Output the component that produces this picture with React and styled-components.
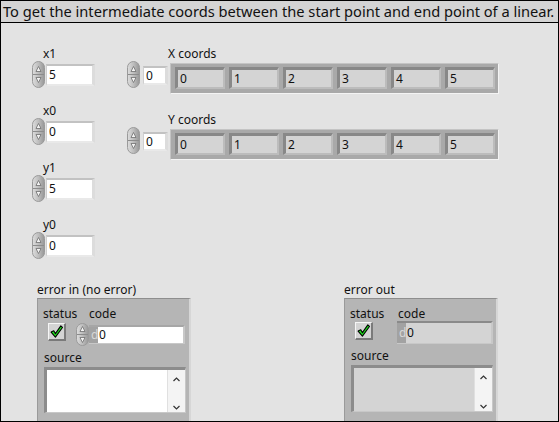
import React from 'react';
import styled, { createGlobalStyle } from 'styled-components';

const GlobalStyle = createGlobalStyle`
  body {
    margin: 0;
    background: #ffffff;
    font-family: "Noto Sans", "Open Sans", sans-serif;
  }
`;

const Window = styled.div`
  width: 559px;
  height: 422px;
  box-sizing: border-box;
  border: 1px solid #000;
  background: #e3e3e3;
  overflow: hidden;
  display: flex;
  flex-direction: column;
  color: #111;
`;

const TitleBar = styled.div`
  height: 22px;
  flex: none;
  box-sizing: border-box;
  border-bottom: 1px solid #000;
  background: #d4d4d4;
  font-size: 14.65px;
  line-height: 20px;
  padding-left: 2px;
  white-space: nowrap;
`;

const TopSection = styled.div`
  display: flex;
  gap: 31px;
  margin-top: 24px;
  padding-left: 31px;
`;

const LeftColumn = styled.div`
  width: 64px;
  display: flex;
  flex-direction: column;
  gap: 15px;
`;

const ArrayColumn = styled.div`
  display: flex;
  flex-direction: column;
  gap: 19px;
`;

const Label = styled.div`
  font-size: 12px;
  line-height: 14px;
  height: 14px;
  white-space: nowrap;
  padding-left: ${(p) => p.$indent || 0}px;
`;

const ControlRow = styled.div`
  display: flex;
  align-items: flex-start;
  height: 28px;
`;

const Field = styled.div`
  box-sizing: border-box;
  width: ${(p) => p.$w}px;
  height: ${(p) => p.$h}px;
  margin-top: ${(p) => p.$top || 0}px;
  margin-left: 1px;
  background: #fff;
  border-top: 2px solid #c2c2c2;
  border-left: 1px solid #cfcfcf;
  border-right: 3px solid #dcdcdc;
  border-bottom: 2px solid #e9e9e9;
  font-size: 12px;
  line-height: ${(p) => p.$h - 4}px;
  padding-left: 2px;
`;

const ArrayRow = styled.div`
  display: flex;
  align-items: flex-start;
  gap: 2px;
`;

const ArrayFrame = styled.div`
  box-sizing: border-box;
  width: 329px;
  height: 31px;
  margin-top: 2px;
  display: flex;
  gap: 4px;
  padding: 3px 3px 4px 4px;
  background: #a9a9a9;
  border-top: 1px solid #c4c4c4;
  border-left: 1px solid #c4c4c4;
  border-right: 1px solid #f4f4f4;
  border-bottom: 1px solid #f4f4f4;
`;

const Cell = styled.div`
  box-sizing: border-box;
  width: 50px;
  height: 22px;
  background: #d4d4d4;
  border-top: 3px solid #888;
  border-left: 3px solid #888;
  border-right: 2px solid #bcbcbc;
  border-bottom: 2px solid #bcbcbc;
  font-size: 12px;
  line-height: 17px;
  padding-left: 2px;
`;

const BottomSection = styled.div`
  display: flex;
  gap: 153px;
  margin-top: 23px;
  padding-left: 36px;
`;

const ClusterFrame = styled.div`
  box-sizing: border-box;
  width: 154px;
  height: 140px;
  margin-top: 1px;
  padding: 8px 0 0 5px;
  background: #b5b5b5;
  border-top: 1px solid #8e8e8e;
  border-left: 1px solid #9a9a9a;
  border-right: 2px solid #d6d6d6;
`;

const ClusterTop = styled.div`
  display: grid;
  grid-template-columns: ${(p) => p.$statusWidth}px auto;
  height: 39px;
`;

const StatusCol = styled.div`
  display: flex;
  flex-direction: column;
`;

const CheckBox = styled.div`
  box-sizing: border-box;
  width: 18px;
  height: 18px;
  margin: ${(p) => p.$top}px 0 0 5px;
  background: #d4d4d4;
  border-top: 1px solid #f6f6f6;
  border-left: 1px solid #f6f6f6;
  border-right: 2px solid #7a7a7a;
  border-bottom: 2px solid #7a7a7a;
  display: flex;
  align-items: center;
  justify-content: center;
`;

const CodeRow = styled.div`
  display: flex;
  align-items: center;
  height: 25px;
  margin-top: 1px;
`;

const CodeBox = styled.div`
  box-sizing: border-box;
  width: 96px;
  height: ${(p) => p.$h}px;
  display: flex;
  background: ${(p) => (p.$control ? '#fff' : '#d4d4d4')};
  border-top: 2px solid ${(p) => (p.$control ? '#a6a6a6' : '#8a8a8a')};
  border-right: 2px solid #c8c8c8;
  border-bottom: 1px solid #c8c8c8;
  font-size: 12px;
  line-height: ${(p) => p.$h - 3}px;
`;

const Radix = styled.span`
  width: 9px;
  padding-left: 2px;
  box-sizing: border-box;
  background: #a2a2a2;
  color: #d8d8d8;
  margin-right: 1px;
`;

const SourceLabel = styled(Label)`
  margin-top: ${(p) => p.$gap}px;
`;

const StringBox = styled.div`
  box-sizing: border-box;
  width: 142px;
  height: ${(p) => p.$h}px;
  margin: 2px 0 0 1px;
  display: flex;
  justify-content: flex-end;
  background: ${(p) => (p.$control ? '#fff' : '#d4d4d4')};
  border-top: 3px solid #8c8c8c;
  border-left: 3px solid #8c8c8c;
  border-right: 1px solid #c8c8c8;
  border-bottom: 1px solid #c8c8c8;
`;

const ScrollBar = styled.div`
  width: 17px;
  display: flex;
  flex-direction: column;
  justify-content: space-between;
  align-items: center;
  padding: 7px 0 2px;
  background: #f4f4f4;
  border-left: 1px solid #e0e0e0;
`;

const Spinner = ({ h = 27 }) => (
  <svg width="13" height={h} viewBox={`0 0 13 ${h}`} style={{ flex: 'none' }}>
    <defs>
      <linearGradient id="spinGrad" x1="0" x2="1" y1="0" y2="0">
        <stop offset="0" stopColor="#dedede" />
        <stop offset="0.5" stopColor="#bdbdbd" />
        <stop offset="1" stopColor="#969696" />
      </linearGradient>
    </defs>
    <rect x="0.5" y="0.5" width="12" height={h - 1} rx="6" fill="url(#spinGrad)" stroke="#9a9a9a" />
    <line x1="1" x2="12" y1={h / 2} y2={h / 2} stroke="#8c8c8c" />
    <path d={`M6.5 ${h / 2 - 8} L9 ${h / 2 - 3} L4 ${h / 2 - 3} Z`} fill="#f2f2f2" stroke="#6e6e6e" strokeWidth="0.8" />
    <path d={`M6.5 ${h / 2 + 8} L9 ${h / 2 + 3} L4 ${h / 2 + 3} Z`} fill="#f2f2f2" stroke="#6e6e6e" strokeWidth="0.8" />
  </svg>
);

const Check = () => (
  <svg width="13" height="13" viewBox="0 0 12 12">
    <path d="M1 6.5 L3.5 5.3 L5 8 L10 0.8 L11.5 2.3 L5 11.2 Z" fill="#1ee61e" stroke="#000" strokeWidth="1" strokeLinejoin="round" />
  </svg>
);

const Chevron = ({ up }) => (
  <svg width="7" height="5" viewBox="0 0 7 5">
    <path d={up ? 'M0.5 4 L3.5 1 L6.5 4' : 'M0.5 1 L3.5 4 L6.5 1'} fill="none" stroke="#333" strokeWidth="1.2" />
  </svg>
);

const NumericControl = ({ label, value }) => (
  <div>
    <Label $indent={11}>{label}</Label>
    <ControlRow>
      <Spinner />
      <Field $w={49} $h={22} $top={3}>{value}</Field>
    </ControlRow>
  </div>
);

const ArrayIndicator = ({ label, values }) => (
  <div>
    <Label $indent={41}>{label}</Label>
    <ArrayRow>
      <Spinner />
      <Field $w={25} $h={19} $top={5}>0</Field>
      <ArrayFrame>
        {values.map((v) => (
          <Cell key={v}>{v}</Cell>
        ))}
      </ArrayFrame>
    </ArrayRow>
  </div>
);

const ErrorCluster = ({ label, control }) => (
  <div>
    <Label>{label}</Label>
    <ClusterFrame>
      <ClusterTop $statusWidth={control ? 33 : 47}>
        <StatusCol>
          <Label>status</Label>
          <CheckBox $top={control ? 2 : 1}>
            <Check />
          </CheckBox>
        </StatusCol>
        <div>
          <Label $indent={control ? 13 : 1}>code</Label>
          {control ? (
            <CodeRow>
              <Spinner h={23} />
              <CodeBox $control $h={19}>
                <Radix>d</Radix>0
              </CodeBox>
            </CodeRow>
          ) : (
            <CodeBox $h={23}>
              <Radix>d</Radix>0
            </CodeBox>
          )}
        </div>
      </ClusterTop>
      <SourceLabel $indent={1} $gap={control ? 5 : 3}>source</SourceLabel>
      <StringBox $control={control} $h={control ? 46 : 47}>
        <ScrollBar>
          <Chevron up />
          <Chevron />
        </ScrollBar>
      </StringBox>
    </ClusterFrame>
  </div>
);

export default function App() {
  const coords = ['0', '1', '2', '3', '4', '5'];
  return (
    <>
      <GlobalStyle />
      <Window>
        <TitleBar>To get the intermediate coords between the start point and end point of a linear.</TitleBar>
        <TopSection>
          <LeftColumn>
            <NumericControl label="x1" value="5" />
            <NumericControl label="x0" value="0" />
            <NumericControl label="y1" value="5" />
            <NumericControl label="y0" value="0" />
          </LeftColumn>
          <ArrayColumn>
            <ArrayIndicator label="X coords" values={coords} />
            <ArrayIndicator label="Y coords" values={coords} />
          </ArrayColumn>
        </TopSection>
        <BottomSection>
          <ErrorCluster label="error in (no error)" control />
          <ErrorCluster label="error out" />
        </BottomSection>
      </Window>
    </>
  );
}
